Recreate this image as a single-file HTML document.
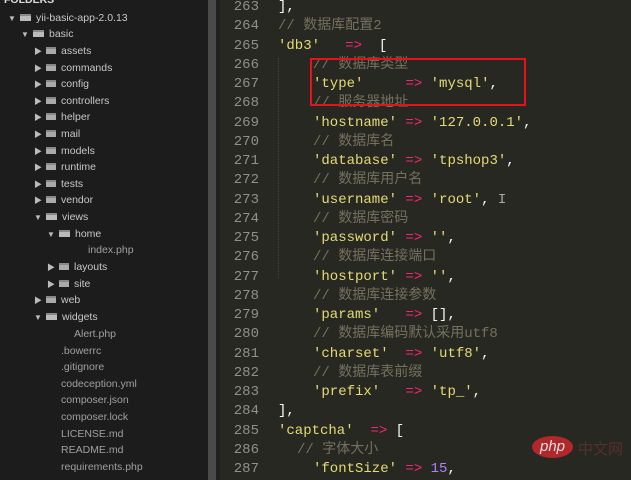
<!DOCTYPE html>
<html><head><meta charset="utf-8"><style>
*{margin:0;padding:0;box-sizing:border-box}
body{width:631px;height:480px;overflow:hidden;background:#272822;position:relative;font-family:"Liberation Sans","Noto Sans CJK SC",sans-serif}
#side{position:absolute;left:0;top:0;width:208px;height:480px;background:#1c1c1c}
#sb{position:absolute;left:208px;top:0;width:8px;height:480px;background:#4a4a4a}
#sb2{position:absolute;left:216px;top:0;width:4px;height:480px;background:#202020}
.r{position:absolute;height:17px;line-height:17px;font-size:10.5px;color:#c8c8c8;white-space:nowrap}
.f{color:#a0a0a0}
.ar{display:inline-block;width:12px;font-size:8px;color:#bbb}
.fd{display:inline-block;width:10px;height:7px;background:#aaa;margin-right:5px;vertical-align:-0px;border-top:2px solid #888}
.op{display:inline-block;width:11px;height:7px;background:#bbb;margin-right:5px;border-top:2px solid #888}
.ln{position:absolute;left:222px;width:37px;text-align:right;font:14px "Liberation Mono",monospace;color:#8f908a;line-height:19.25px}
.c{position:absolute;font:14px "Liberation Mono","Noto Sans CJK SC",monospace;line-height:19.25px;white-space:pre;color:#f8f8f2}
.s{color:#e6db74}.o{color:#f92672}.m{color:#75715e}.n{color:#ae81ff}
#box{position:absolute;left:310px;top:58px;width:216px;height:48px;border:2px solid #e8101a}
#guide{position:absolute;left:278px;top:58px;height:220px;border-left:1px dotted #444}
</style></head><body>
<div id="side">
<div class="r" style="left:4px;top:-8px;font-weight:bold;color:#ddd">FOLDERS</div>
<div class="r" style="left:8px;top:10px"><span class="ar">▼</span><span class="op"></span>yii-basic-app-2.0.13</div>
<div class="r" style="left:21px;top:26px"><span class="ar">▼</span><span class="op"></span>basic</div>
<div class="r" style="left:34px;top:43px"><span class="ar">▶</span><span class="fd"></span>assets</div>
<div class="r" style="left:34px;top:60px"><span class="ar">▶</span><span class="fd"></span>commands</div>
<div class="r" style="left:34px;top:76px"><span class="ar">▶</span><span class="fd"></span>config</div>
<div class="r" style="left:34px;top:93px"><span class="ar">▶</span><span class="fd"></span>controllers</div>
<div class="r" style="left:34px;top:109px"><span class="ar">▶</span><span class="fd"></span>helper</div>
<div class="r" style="left:34px;top:126px"><span class="ar">▶</span><span class="fd"></span>mail</div>
<div class="r" style="left:34px;top:143px"><span class="ar">▶</span><span class="fd"></span>models</div>
<div class="r" style="left:34px;top:159px"><span class="ar">▶</span><span class="fd"></span>runtime</div>
<div class="r" style="left:34px;top:176px"><span class="ar">▶</span><span class="fd"></span>tests</div>
<div class="r" style="left:34px;top:192px"><span class="ar">▶</span><span class="fd"></span>vendor</div>
<div class="r" style="left:34px;top:209px"><span class="ar">▼</span><span class="op"></span>views</div>
<div class="r" style="left:47px;top:226px"><span class="ar">▼</span><span class="op"></span>home</div>
<div class="r f" style="left:88px;top:242px">index.php</div>
<div class="r" style="left:47px;top:259px"><span class="ar">▶</span><span class="fd"></span>layouts</div>
<div class="r" style="left:47px;top:276px"><span class="ar">▶</span><span class="fd"></span>site</div>
<div class="r" style="left:34px;top:292px"><span class="ar">▶</span><span class="fd"></span>web</div>
<div class="r" style="left:34px;top:309px"><span class="ar">▼</span><span class="op"></span>widgets</div>
<div class="r f" style="left:74px;top:326px">Alert.php</div>
<div class="r f" style="left:61px;top:343px">.bowerrc</div>
<div class="r f" style="left:61px;top:359px">.gitignore</div>
<div class="r f" style="left:61px;top:376px">codeception.yml</div>
<div class="r f" style="left:61px;top:392px">composer.json</div>
<div class="r f" style="left:61px;top:409px">composer.lock</div>
<div class="r f" style="left:61px;top:426px">LICENSE.md</div>
<div class="r f" style="left:61px;top:442px">README.md</div>
<div class="r f" style="left:61px;top:459px">requirements.php</div>
</div>
<div id="sb"></div><div id="sb2"></div>
<div class="ln" style="top:-2px">263<br>264<br>265<br>266<br>267<br>268<br>269<br>270<br>271<br>272<br>273<br>274<br>275<br>276<br>277<br>278<br>279<br>280<br>281<br>282<br>283<br>284<br>285<br>286<br>287</div>
<div id="guide"></div>
<div class="c" style="left:278px;top:-2px">],
<span class="m">// 数据库配置2</span>
<span class="s">'db3'</span>   <span class="o">=&gt;</span>  [</div>
<div class="c" style="left:313px;top:55.75px"><span class="m">// 数据库类型</span>
<span class="s">'type'</span>     <span class="o">=&gt;</span> <span class="s">'mysql'</span>,
<span class="m">// 服务器地址</span>
<span class="s">'hostname'</span> <span class="o">=&gt;</span> <span class="s">'127.0.0.1'</span>,
<span class="m">// 数据库名</span>
<span class="s">'database'</span> <span class="o">=&gt;</span> <span class="s">'tpshop3'</span>,
<span class="m">// 数据库用户名</span>
<span class="s">'username'</span> <span class="o">=&gt;</span> <span class="s">'root'</span>, <span style="color:#aaa">I</span>
<span class="m">// 数据库密码</span>
<span class="s">'password'</span> <span class="o">=&gt;</span> <span class="s">''</span>,
<span class="m">// 数据库连接端口</span>
<span class="s">'hostport'</span> <span class="o">=&gt;</span> <span class="s">''</span>,
<span class="m">// 数据库连接参数</span>
<span class="s">'params'</span>   <span class="o">=&gt;</span> [],
<span class="m">// 数据库编码默认采用utf8</span>
<span class="s">'charset'</span>  <span class="o">=&gt;</span> <span class="s">'utf8'</span>,
<span class="m">// 数据库表前缀</span>
<span class="s">'prefix'</span>   <span class="o">=&gt;</span> <span class="s">'tp_'</span>,</div>
<div class="c" style="left:278px;top:402.25px">],
<span class="s">'captcha'</span>  <span class="o">=&gt;</span> [</div>
<div class="c" style="left:297px;top:440.75px"><span class="m">// 字体大小</span></div>
<div class="c" style="left:313px;top:460px"><span class="s">'fontSize'</span> <span class="o">=&gt;</span> <span class="n">15</span>,</div>
<div id="box"></div>
<div style="position:absolute;left:532px;top:436px;width:41px;height:22px;border-radius:50%;background:#c9282d;color:#fff;font:italic 15px 'Liberation Sans',sans-serif;text-align:center;line-height:21px;opacity:.85">php</div>
<div style="position:absolute;left:578px;top:438px;font:15px 'Noto Sans CJK SC',sans-serif;color:#5a3030;opacity:.9">中文网</div>
</body></html>
